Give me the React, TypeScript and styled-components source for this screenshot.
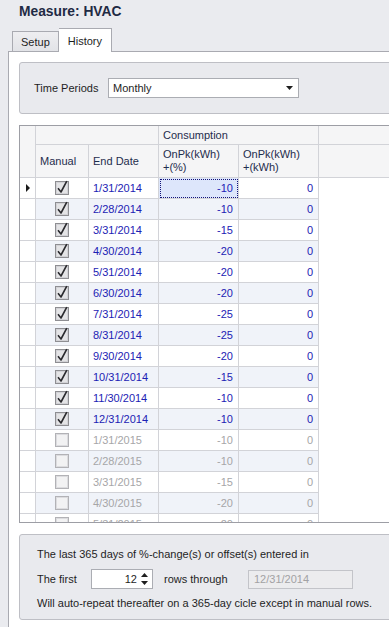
import React from "react";
import styled, { createGlobalStyle } from "styled-components";

const Global = createGlobalStyle`
  html, body { margin: 0; padding: 0; background: #eaebef; }
  * { box-sizing: border-box; }
`;

const Root = styled.div`
  width: 389px;
  height: 627px;
  overflow: hidden;
  background: #eaebef;
  font-family: "Liberation Sans", Arial, sans-serif;
  font-size: 11px;
  color: #1e1e1e;
  display: flex;
  flex-direction: column;
`;

const Title = styled.div`
  height: 28px;
  padding: 4px 0 0 19px;
  font-size: 13.8px;
  font-weight: bold;
  color: #1f2a44;
  flex: none;
`;

const TabStrip = styled.div`
  display: flex;
  align-items: flex-end;
  padding-left: 12px;
  height: 24px;
  margin-bottom: -1px;
  position: relative;
  z-index: 1;
  flex: none;
`;

const Tab = styled.div<{ $active?: boolean }>`
  height: ${(p) => (p.$active ? 24 : 20)}px;
  margin-bottom: ${(p) => (p.$active ? 0 : 1)}px;
  padding: 0 ${(p) => (p.$active ? 9 : 8)}px;
  border: 1px solid #a9aab1;
  border-bottom: none;
  border-left: ${(p) => (p.$active ? "none" : "1px solid #a9aab1")};
  background: ${(p) => (p.$active ? "#ffffff" : "linear-gradient(#eeeef1, #e2e3e7)")};
  display: flex;
  align-items: center;
  padding-top: ${(p) => (p.$active ? 0 : 1)}px;
  color: #1e1e1e;
`;

const Panel = styled.div`
  flex: 1;
  margin-left: 8px;
  border-top: 1px solid #a9aab1;
  border-left: 1px solid #a9aab1;
  background: #ffffff;
  padding: 10px 0 0 10px;
`;

const GroupBox = styled.div`
  width: 420px;
  background: #e9eaee;
  border: 1px solid #bebfc5;
  border-radius: 3px;
`;

const PeriodBox = styled(GroupBox)`
  height: 52px;
  display: flex;
  align-items: center;
  padding-left: 14px;
`;

const FieldLabel = styled.span<{ $w: number }>`
  width: ${(p) => p.$w}px;
  flex: none;
  white-space: nowrap;
`;

const Combo = styled.div`
  width: 191px;
  height: 20px;
  background: #ffffff;
  border: 1px solid #abadb3;
  display: flex;
  align-items: center;
  padding-left: 4px;
  position: relative;
`;

const ComboArrow = styled.svg`
  position: absolute;
  right: 5px;
  top: 7px;
`;

const Grid = styled.div`
  margin-top: 11px;
  width: 420px;
  height: 398px;
  border: 1px solid #9d9ea5;
  overflow: hidden;
  background: #ffffff;
`;

const HeadArea = styled.div`
  display: flex;
  background: #f5f5f6;
  border-bottom: 1px solid #d2d3d8;
  color: #1f2d4d;
`;

const IndHead = styled.div`
  width: 16px;
  height: 51px;
  border-right: 1px solid #d2d3d8;
  flex: none;
`;

const HeadCol = styled.div`
  flex: 1;
  display: flex;
  flex-direction: column;
`;

const HeadRow = styled.div<{ $h: number }>`
  display: flex;
  height: ${(p) => p.$h}px;
`;

const HeadCell = styled.div<{ $w?: number; $top?: boolean }>`
  width: ${(p) => (p.$w ? `${p.$w}px` : "auto")};
  flex: ${(p) => (p.$w ? "none" : "1")};
  border-right: ${(p) => (p.$w ? "1px solid #d2d3d8" : "none")};
  border-bottom: ${(p) => (p.$top ? "1px solid #d2d3d8" : "none")};
  padding-left: 4px;
  display: flex;
  align-items: center;
  line-height: 13px;
  white-space: pre;
`;

const Row = styled.div<{ $alt: boolean }>`
  display: flex;
  height: 21px;
  background: ${(p) => (p.$alt ? "#f0f3f9" : "#ffffff")};
`;

const IndCell = styled.div`
  width: 16px;
  flex: none;
  border-right: 1px solid #d2d3d8;
  border-bottom: 1px solid #d2d3d8;
  display: flex;
  align-items: center;
  padding-left: 6px;
  background: #ffffff;
`;

const Pointer = styled.div`
  width: 0;
  height: 0;
  border-top: 4px solid transparent;
  border-bottom: 4px solid transparent;
  border-left: 4px solid #1a1a1a;
`;

const Cell = styled.div<{ $w: number; $right?: boolean; $dim: boolean; $focus?: boolean; $center?: boolean }>`
  width: ${(p) => p.$w}px;
  flex: none;
  border-right: 1px solid #d2d3d8;
  border-bottom: 1px solid #d2d3d8;
  display: flex;
  align-items: center;
  justify-content: ${(p) => (p.$center ? "center" : p.$right ? "flex-end" : "flex-start")};
  padding: ${(p) => (p.$right ? "0 5px 0 0" : p.$center ? "0" : "0 0 0 4px")};
  color: ${(p) => (p.$dim ? "#a6a6a8" : "#1c22b4")};
  background: ${(p) => (p.$focus ? "#dde6fb" : "transparent")};
  outline: ${(p) => (p.$focus ? "1px dotted #14147a" : "none")};
  outline-offset: -2px;
`;

const FillCell = styled.div`
  flex: 1;
  background: #ffffff;
`;

const BottomBox = styled(GroupBox)`
  margin-top: 11px;
  height: 86px;
  padding: 12px 0 0 17px;
  display: flex;
  flex-direction: column;
`;

const Line = styled.div<{ $mt?: number }>`
  height: 14px;
  line-height: 14px;
  margin-top: ${(p) => p.$mt ?? 0}px;
  white-space: nowrap;
`;

const FormRow = styled.div`
  display: flex;
  align-items: center;
  height: 20px;
  margin-top: 8px;
`;

const Spin = styled.div`
  width: 62px;
  height: 20px;
  border: 1px solid #abadb3;
  background: #ffffff;
  display: flex;
  align-items: center;
  flex: none;
`;

const SpinValue = styled.span`
  flex: 1;
  text-align: right;
  padding-right: 4px;
`;

const SpinButtons = styled.svg`
  margin-right: 4px;
`;

const Disabled = styled.div`
  width: 105px;
  height: 19px;
  border: 1px solid #c3c4c9;
  background: #ececee;
  color: #a2a2a4;
  display: flex;
  align-items: center;
  padding-left: 5px;
  margin-left: 0;
`;

const Spacer = styled.div<{ $w: number }>`
  width: ${(p) => p.$w}px;
  flex: none;
`;

const CheckBox = ({ checked }: { checked: boolean }) => (
  <svg width="15" height="16" viewBox="0 0 15 16">
    <rect x="0.5" y="1.5" width="13" height="13" fill={checked ? "#e4e4e6" : "#f2f2f3"} stroke={checked ? "#8e8e92" : "#b2b2b6"} />
    <rect x="1.5" y="2.5" width="11" height="11" fill="none" stroke={checked ? "#d2d2d6" : "#dcdcdf"} />
    {checked && (
      <path d="M3 8.2 L6 12 L11.8 1.2" fill="none" stroke="#2a2a2e" strokeWidth="1.6" strokeLinejoin="round" />
    )}
  </svg>
);

const rows: { date: string; pct: number; manual: boolean }[] = [
  { date: "1/31/2014", pct: -10, manual: true },
  { date: "2/28/2014", pct: -10, manual: true },
  { date: "3/31/2014", pct: -15, manual: true },
  { date: "4/30/2014", pct: -20, manual: true },
  { date: "5/31/2014", pct: -20, manual: true },
  { date: "6/30/2014", pct: -20, manual: true },
  { date: "7/31/2014", pct: -25, manual: true },
  { date: "8/31/2014", pct: -25, manual: true },
  { date: "9/30/2014", pct: -20, manual: true },
  { date: "10/31/2014", pct: -15, manual: true },
  { date: "11/30/2014", pct: -10, manual: true },
  { date: "12/31/2014", pct: -10, manual: true },
  { date: "1/31/2015", pct: -10, manual: false },
  { date: "2/28/2015", pct: -10, manual: false },
  { date: "3/31/2015", pct: -15, manual: false },
  { date: "4/30/2015", pct: -20, manual: false },
  { date: "5/31/2015", pct: -20, manual: false },
];

export default function App() {
  return (
    <Root>
      <Global />
      <Title>Measure: HVAC</Title>
      <TabStrip>
        <Tab>Setup</Tab>
        <Tab $active>History</Tab>
      </TabStrip>
      <Panel>
        <PeriodBox>
          <FieldLabel $w={74}>Time Periods</FieldLabel>
          <Combo>
            Monthly
            <ComboArrow width="7" height="4" viewBox="0 0 7 4">
              <path d="M0 0 H7 L3.5 4 Z" fill="#1e1e1e" />
            </ComboArrow>
          </Combo>
        </PeriodBox>
        <Grid>
          <HeadArea>
            <IndHead />
            <HeadCol>
              <HeadRow $h={19}>
                <HeadCell $w={123} $top />
                <HeadCell $w={160} $top>Consumption</HeadCell>
                <HeadCell $top />
              </HeadRow>
              <HeadRow $h={32}>
                <HeadCell $w={53}>Manual</HeadCell>
                <HeadCell $w={70}>End Date</HeadCell>
                <HeadCell $w={80}>{"OnPk(kWh)\n+(%)"}</HeadCell>
                <HeadCell $w={80}>{"OnPk(kWh)\n+(kWh)"}</HeadCell>
                <HeadCell />
              </HeadRow>
            </HeadCol>
          </HeadArea>
          {rows.map((r, i) => (
            <Row key={r.date} $alt={i % 2 === 1}>
              <IndCell>{i === 0 && <Pointer />}</IndCell>
              <Cell $w={53} $dim={!r.manual} $center>
                <CheckBox checked={r.manual} />
              </Cell>
              <Cell $w={70} $dim={!r.manual}>{r.date}</Cell>
              <Cell $w={80} $dim={!r.manual} $right $focus={i === 0}>{r.pct}</Cell>
              <Cell $w={80} $dim={!r.manual} $right>0</Cell>
              <FillCell />
            </Row>
          ))}
        </Grid>
        <BottomBox>
          <Line>The last 365 days of %-change(s) or offset(s) entered in</Line>
          <FormRow>
            <FieldLabel $w={54}>The first</FieldLabel>
            <Spin>
              <SpinValue>12</SpinValue>
              <SpinButtons width="7" height="14" viewBox="0 0 7 14">
                <path d="M0 5 L3.5 1 L7 5 Z" fill="#1e1e1e" />
                <path d="M0 9 L3.5 13 L7 9 Z" fill="#1e1e1e" />
              </SpinButtons>
            </Spin>
            <Spacer $w={11} />
            <FieldLabel $w={84}>rows through</FieldLabel>
            <Disabled>12/31/2014</Disabled>
          </FormRow>
          <Line $mt={7}>Will auto-repeat thereafter on a 365-day cicle except in manual rows.</Line>
        </BottomBox>
      </Panel>
    </Root>
  );
}
